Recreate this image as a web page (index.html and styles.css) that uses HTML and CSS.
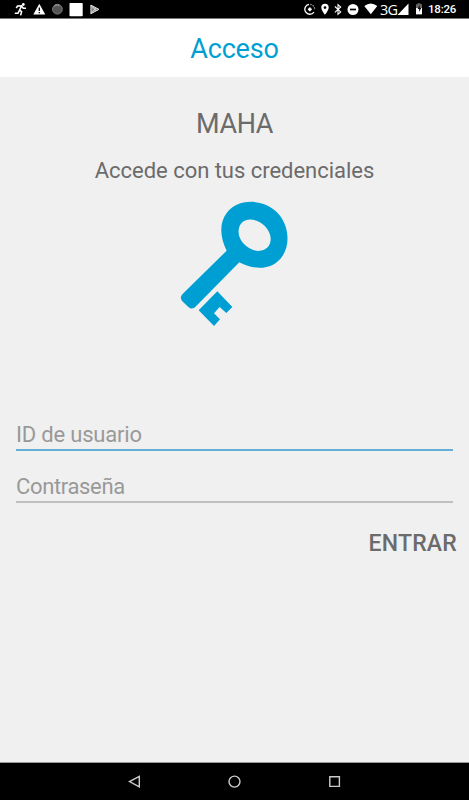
FILE: index.html
```
<!DOCTYPE html>
<html lang="es">
<head>
<meta charset="utf-8">
<title>Acceso</title>
<link rel="stylesheet" href="styles.css">
</head>
<body>
<div class="screen">
  <div class="status">
    <div class="notifications">
      <svg width="13" height="18" viewBox="0 0 13 18"><circle cx="9.3" cy="4.5" r="1.4" fill="#fff"/><path d="M2.2 8 3.6 6 7.5 5.8 9.2 8.3H12M.8 13.3H4L7.6 6M5.6 9.8 7.6 11.8 6.6 15.4" fill="none" stroke="#fff" stroke-width="1.6"/></svg>
      <svg width="13" height="18" viewBox="0 0 13 18"><path d="M6.3 3.7 12.3 14.5H.3Z" fill="#fff"/><path d="M6.3 7.4v3.5M6.3 12v1.3" stroke="#000" stroke-width="1.3"/></svg>
      <svg width="12" height="18" viewBox="0 0 12 18"><circle cx="6.4" cy="9.2" r="4.9" fill="#555" stroke="#777"/><path d="M3.4 6.3A4.2 4.2 0 0 1 8.4 5.8" stroke="#888" stroke-width="1.5" fill="none"/></svg>
      <svg width="14" height="18" viewBox="0 0 14 18"><rect x=".5" y="3.1" width="13.2" height="13.2" rx=".7" fill="#fff"/></svg>
      <svg width="11" height="18" viewBox="0 0 11 18"><path d="M1.9 5.1 10 9.4 1.9 13.7Z" fill="#888" stroke="#ddd"/><path d="m2 5.3 5.2 5.5M2 13.5l5.2-5.5" stroke="#eee" stroke-width=".8"/></svg>
    </div>
    <div class="indicators">
      <svg width="12" height="18" viewBox="0 0 12 18"><path d="M6.3 4.3A5 5 0 0 1 10.6 10" fill="none" stroke="#999" stroke-width="1.2" stroke-dasharray="1.5 1"/><path d="M5 4.3A5 5 0 1 0 10 12" fill="none" stroke="#fff" stroke-width="1.3"/><path d="M5.8 7.4v3.8M3.9 9.3h3.8" stroke="#fff" stroke-width="1.8"/></svg>
      <svg width="8" height="18" viewBox="0 0 8 18"><path fill-rule="evenodd" d="M4 3.8A3.7 3.7 0 0 0 .3 7.5C.3 10.4 4 14.8 4 14.8S7.7 10.4 7.7 7.5A3.7 3.7 0 0 0 4 3.8Zm0 2.4a1.4 1.4 0 1 1 0 2.8 1.4 1.4 0 0 1 0-2.8Z" fill="#fff"/></svg>
      <svg width="8" height="18" viewBox="0 0 8 18"><path d="m.9 6.5 5.8 5.4L4 14.3V4.6L6.7 7 .9 12.4" fill="none" stroke="#fff" stroke-width="1.1"/></svg>
      <svg width="12" height="18" viewBox="0 0 12 18"><circle cx="6" cy="9.5" r="5.5" fill="#fff"/><path d="M3 9.5h6" stroke="#000" stroke-width="1.7"/></svg>
      <svg width="14" height="18" viewBox="0 0 14 18"><path d="M.3 6.1Q6.8.8 13.3 6.1L6.8 14.3Z" fill="#fff"/></svg>
      <span class="network">3G</span>
      <svg class="signal" width="12" height="18" viewBox="0 0 12 18"><path d="M11.5 3.5V14.9H.5Z" fill="#fff"/></svg>
      <svg width="8" height="18" viewBox="0 0 8 18"><path d="M2.5 3.3h3v1H7v10H1v-10h1.5Z" fill="#666"/><path d="M1 8h6v6.3H1Z" fill="#fff"/><path d="M4.7 5 2.7 9h1.5v3l2-4H4.7Z" fill="#000"/></svg>
      <span class="clock">18:26</span>
    </div>
  </div>
  <header class="header">Acceso</header>
  <main class="main">
    <h1 class="title">MAHA</h1>
    <p class="subtitle">Accede con tus credenciales</p>
    <svg class="key" width="130" height="145" viewBox="0 0 390 435">
      <path fill="#009fd3" fill-rule="evenodd" d="M170 182C150 142 147 99 170 69C204 24 274 27 317 63C354 96 364 157 338 197C311 239 256 243 208 217L78 349Q67 361 55 351L37 334Q28 323 37 313ZM214 100C199 119 205 147 226 166C248 186 277 188 293 172C309 154 303 124 281 105C259 86 229 83 214 100Z"/>
      <path fill="#009fd3" d="M142 304 187 351 169 369 149 351 132 370 150 388 132 408 86 361Z"/>
    </svg>
    <form class="form">
      <input class="field active" type="text" placeholder="ID de usuario" aria-label="ID de usuario">
      <input class="field" type="password" placeholder="Contraseña" aria-label="Contraseña">
      <button class="submit" type="button">ENTRAR</button>
    </form>
  </main>
  <nav class="navbar">
    <svg width="14" height="14" viewBox="0 0 14 14"><path d="M11.3 1.3v10.6L1.5 6.6Z"/></svg>
    <svg width="14" height="14" viewBox="0 0 14 14"><circle cx="6.5" cy="6.6" r="5.5"/></svg>
    <svg width="14" height="14" viewBox="0 0 14 14"><path d="M1.8 1.8h9.6v9.6H1.8Z"/></svg>
  </nav>
</div>
</body>
</html>
```
FILE: styles.css
```
* { box-sizing: border-box; }
body { margin: 0; font-family: Roboto, sans-serif; }
svg { display: block; flex: none; }
.screen { width: 469px; height: 800px; display: flex; flex-direction: column; background: #f0f0f0; overflow: hidden; }
.status { height: 19px; flex: none; background: #000; border-bottom: 1px solid #777; display: flex; justify-content: space-between; padding: 0 13px 0 14px; color: #fff; }
.notifications { display: flex; gap: 5.7px; }
.indicators { display: flex; gap: 5px; }
.network { width: 16px; margin: 0 -4px 0 -3px; font: 14.5px/19px "Open Sans", sans-serif; letter-spacing: -0.9px; }
.signal { margin: 0 1px 0 0; }
.clock { width: 28px; font-size: 11.5px; font-weight: 500; line-height: 19px; letter-spacing: -0.2px; white-space: nowrap; }
.header { height: 58px; flex: none; background: #fff; color: #009fd3; font-size: 27px; line-height: 60px; text-align: center; letter-spacing: -0.2px; }
.main { flex: 1; display: flex; flex-direction: column; align-items: center; color: #6b6b6b; }
.title { margin: 30px 0 0; font-size: 27px; line-height: 34px; font-weight: 400; letter-spacing: -0.4px; }
.subtitle { margin: 15px 0 0; font-size: 22px; line-height: 30px; letter-spacing: -0.03px; }
.key { margin: 4px 0 0 1px; }
.form { width: 100%; padding: 0 16px; margin-top: 81px; display: flex; flex-direction: column; }
.field { width: 100%; height: 35px; padding: 3px 0 0; margin: 0 0 17px; border: 0; border-bottom: 2px solid #c0c0c0; border-radius: 0; background: transparent; font: 22px/30px Roboto, sans-serif; letter-spacing: -0.35px; color: #6b6b6b; outline: 0; }
.field::placeholder { color: #999; opacity: 1; }
.active { border-color: #63afd7; letter-spacing: -0.2px; }
.submit { align-self: flex-end; margin: 7px -4px 0 0; padding: 0; border: 0; background: none; font: 500 23px/34px Roboto, sans-serif; letter-spacing: 0.2px; color: #6b6b6b; }
.navbar { height: 38px; flex: none; background: #000; border-top: 1px solid #999; display: flex; justify-content: center; align-items: center; gap: 86px; }
.navbar svg { fill: none; stroke: #ccc; stroke-width: 1.4; }
```
